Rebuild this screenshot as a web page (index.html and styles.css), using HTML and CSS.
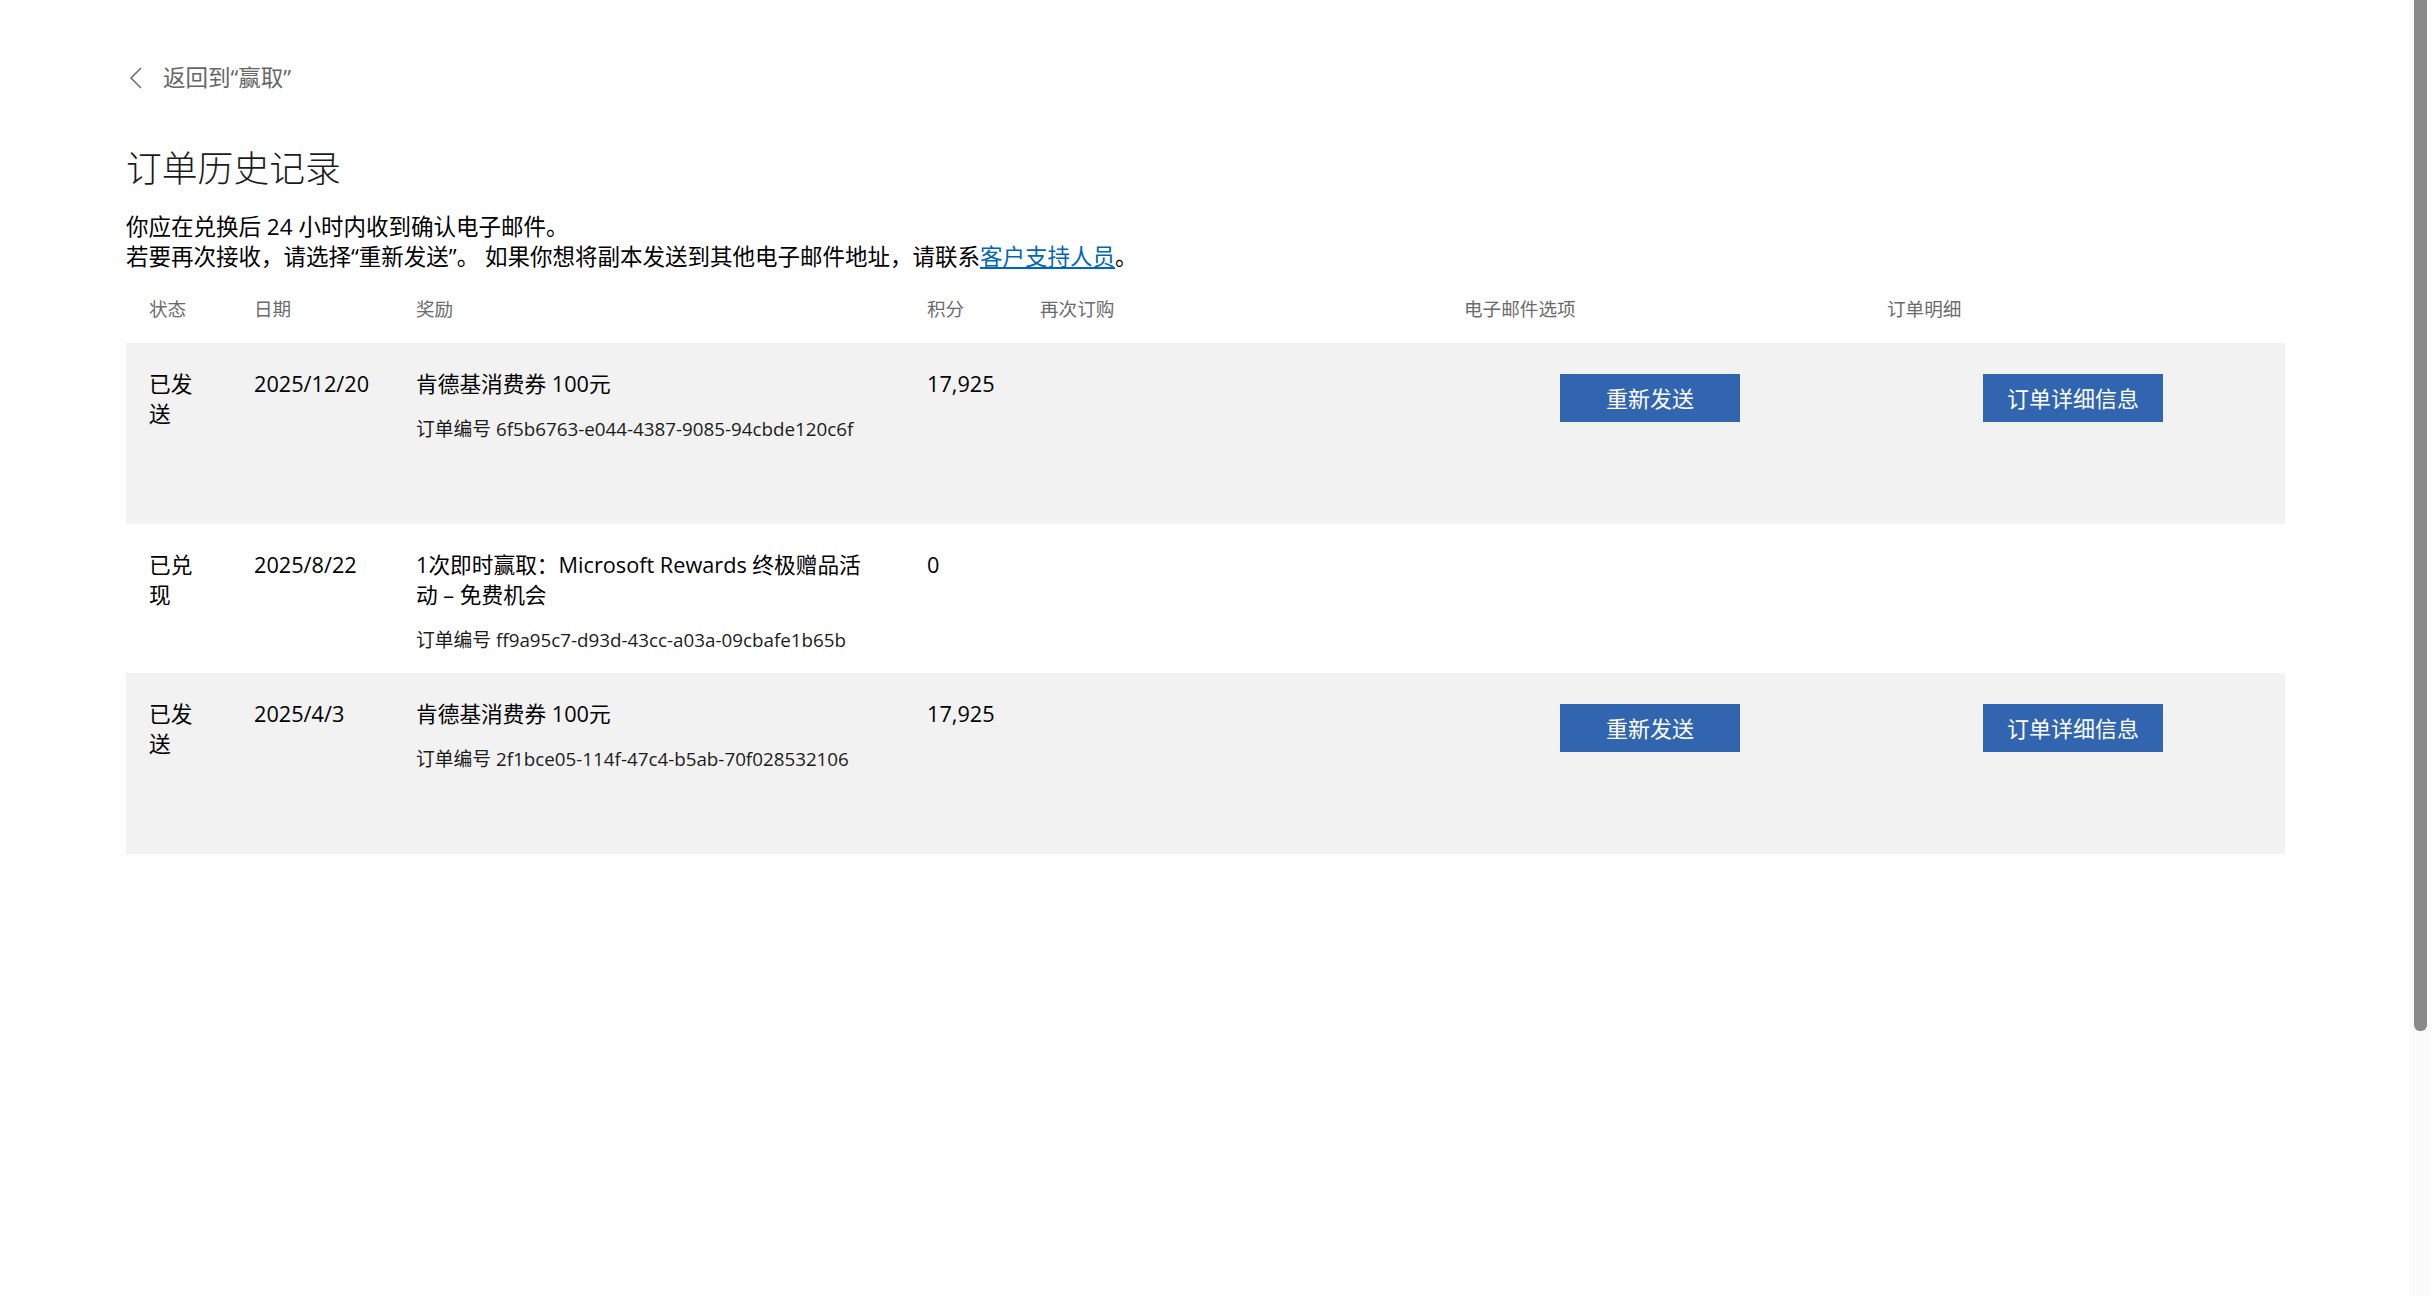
FILE: index.html
```html
<!DOCTYPE html>
<html lang="zh-CN">
<head>
<meta charset="utf-8">
<title>订单历史记录</title>
<link rel="stylesheet" href="styles.css">
</head>
<body>
<div class="scrollbar"><div class="thumb"></div></div>
<main class="page">
  <a class="back" href="#">
    <svg class="chevron" width="16" height="22" viewBox="0 0 16 22" aria-hidden="true"><path d="M13 1 L3 11 L13 21" fill="none" stroke="#6f6f6f" stroke-width="1.6"/></svg>
    <span>返回到“赢取”</span>
  </a>
  <h1 class="title">订单历史记录</h1>
  <p class="intro">你应在兑换后 24 小时内收到确认电子邮件。<br>若要再次接收，请选择“重新发送”。 如果你想将副本发送到其他电子邮件地址，请联系<a class="link" href="#">客户支持人员</a>。</p>

  <div class="table">
    <div class="row head">
      <div class="cell">状态</div>
      <div class="cell">日期</div>
      <div class="cell">奖励</div>
      <div class="cell">积分</div>
      <div class="cell">再次订购</div>
      <div class="cell">电子邮件选项</div>
      <div class="cell">订单明细</div>
    </div>

    <div class="row item alt">
      <div class="cell">已发送</div>
      <div class="cell">2025/12/20</div>
      <div class="cell reward">
        <div>肯德基消费券 100元</div>
        <div class="order">订单编号 6f5b6763-e044-4387-9085-94cbde120c6f</div>
      </div>
      <div class="cell">17,925</div>
      <div class="cell"></div>
      <div class="cell action"><button class="btn">重新发送</button></div>
      <div class="cell action"><button class="btn">订单详细信息</button></div>
    </div>

    <div class="row item">
      <div class="cell">已兑现</div>
      <div class="cell">2025/8/22</div>
      <div class="cell reward">
        <div>1次即时赢取：Microsoft Rewards 终极赠品活动 – 免费机会</div>
        <div class="order">订单编号 ff9a95c7-d93d-43cc-a03a-09cbafe1b65b</div>
      </div>
      <div class="cell">0</div>
      <div class="cell"></div>
      <div class="cell"></div>
      <div class="cell"></div>
    </div>

    <div class="row item alt">
      <div class="cell">已发送</div>
      <div class="cell">2025/4/3</div>
      <div class="cell reward">
        <div>肯德基消费券 100元</div>
        <div class="order">订单编号 2f1bce05-114f-47c4-b5ab-70f028532106</div>
      </div>
      <div class="cell">17,925</div>
      <div class="cell"></div>
      <div class="cell action"><button class="btn">重新发送</button></div>
      <div class="cell action"><button class="btn">订单详细信息</button></div>
    </div>
  </div>
</main>
</body>
</html>
```

FILE: styles.css
```css
html, body {
  margin: 0;
  padding: 0;
  background: #ffffff;
}

body {
  font-family: "Open Sans", "Noto Sans CJK SC", sans-serif;
  color: #000000;
  font-size: 21.7px;
  line-height: 30px;
}

.page {
  width: 2159px;
  padding: 63px 0 200px 126px;
}

.back {
  display: flex;
  align-items: center;
  height: 30px;
  color: #666666;
  text-decoration: none;
  font-size: 22.5px;
  line-height: 30px;
}

.chevron {
  display: block;
  margin-left: 2px;
}

.back span {
  margin-left: 19px;
}

.title {
  margin: 50px 0 0;
  font-family: "Noto Sans CJK SC", sans-serif;
  font-size: 35.8px;
  font-weight: 300;
  line-height: 46px;
  color: #1b1b1b;
}

.intro {
  margin: 23px 0 0;
  font-size: 22.5px;
  line-height: 30px;
  color: #000000;
}

.link {
  color: #0067b8;
  text-decoration: underline;
}

.table {
  margin-top: 24px;
}

.row {
  display: grid;
  grid-template-columns: 105px 162px 511px 113px 424px 423px 421px;
}

.cell {
  padding: 0 23px;
  min-width: 0;
}

.head .cell {
  font-size: 18.6px;
  line-height: 26px;
  color: #6b6b6b;
  padding-bottom: 21px;
}

.item .cell {
  padding-top: 26px;
  padding-bottom: 20px;
}

.item .cell.reward {
  padding-right: 35px;
}

.alt {
  background: #f2f2f2;
}

.order {
  margin-top: 17px;
  font-size: 18.8px;
  line-height: 26px;
  color: #1b1b1b;
}

.item .cell.action {
  padding-top: 31px;
  padding-bottom: 102px;
}

.btn {
  display: block;
  width: 180px;
  height: 48px;
  margin-left: 96px;
  border: none;
  border-radius: 0;
  background: #3165b0;
  color: #ffffff;
  font-family: "Open Sans", "Noto Sans CJK SC", sans-serif;
  font-size: 22px;
  line-height: 48px;
  padding: 0;
  cursor: pointer;
}

.scrollbar {
  position: fixed;
  top: 0;
  right: 0;
  width: 22px;
  height: 100%;
  background: #fbfbfb;
}

.thumb {
  margin-left: 5px;
  width: 13px;
  height: 1031px;
  background: #8a8a8a;
  border-radius: 0 0 6px 6px;
}
```
